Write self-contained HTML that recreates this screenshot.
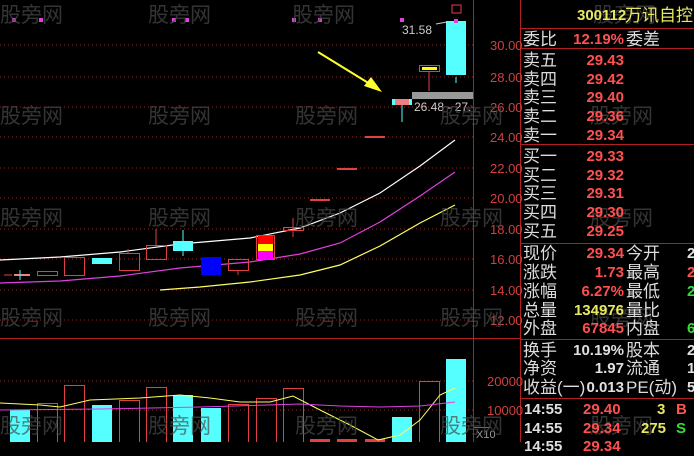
<!DOCTYPE html>
<html><head><meta charset="utf-8"><style>
*{margin:0;padding:0}
body{width:694px;height:442px;background:#000;overflow:hidden;position:relative;font-family:"Liberation Sans","Noto Sans CJK SC",sans-serif}
svg{position:absolute;left:0;top:0}
.r{position:absolute;left:521px;width:173px;height:19px;font-size:17px;line-height:19px;color:#ddd;white-space:nowrap;padding-left:2px}
.r span{position:absolute;font-weight:bold;font-size:15px}
.l{left:3px}
.v{right:72px;text-align:right}
.m{left:105px}
.e{left:166px}
.red{color:#ff5050}.yel{color:#e8e860}.grn{color:#30e030}.wh{color:#e0e0e0}
.m.lb{font-weight:normal!important;font-size:17px!important;color:#ddd}
</style></head><body>
<svg width="694" height="442" font-family="Liberation Sans,Noto Sans CJK SC,sans-serif">
<g stroke="#a02020" stroke-dasharray="1,3" stroke-width="1">
<line x1="0" y1="45" x2="473" y2="45"/><line x1="0" y1="77" x2="473" y2="77"/><line x1="0" y1="107" x2="473" y2="107"/><line x1="0" y1="137" x2="473" y2="137"/><line x1="0" y1="168" x2="473" y2="168"/><line x1="0" y1="198" x2="473" y2="198"/><line x1="0" y1="229" x2="473" y2="229"/><line x1="0" y1="259" x2="473" y2="259"/><line x1="0" y1="290" x2="473" y2="290"/><line x1="0" y1="320" x2="473" y2="320"/>
<line x1="0" y1="381" x2="473" y2="381"/><line x1="0" y1="410" x2="473" y2="410"/>
</g>
<line x1="473.5" y1="0" x2="473.5" y2="442" stroke="#b02020"/>
<line x1="0" y1="338.5" x2="521" y2="338.5" stroke="#b02020"/>
<line x1="520.5" y1="0" x2="520.5" y2="442" stroke="#b02020"/>
<g fill="#d04040" font-size="13">
<text x="490" y="50">30.00</text><text x="490" y="82">28.00</text><text x="490" y="112">26.00</text><text x="490" y="142">24.00</text><text x="490" y="173">22.00</text><text x="490" y="203">20.00</text><text x="490" y="234">18.00</text><text x="490" y="264">16.00</text><text x="490" y="295">14.00</text><text x="490" y="325">12.00</text>
<text x="487" y="386">20000</text><text x="487" y="415">10000</text>
</g>
<rect x="474" y="427" width="16" height="1" fill="#d04040"/>
<text x="476" y="438" fill="#999" font-size="11">X10</text>
<polyline fill="none" stroke="#fff" stroke-width="1.2" points="0,260 60,257 120,252 180,244 250,238 300,228 340,213 380,193 420,166 455,140"/>
<polyline fill="none" stroke="#e040e0" stroke-width="1.2" points="0,283 60,281 120,276 180,268 250,262 300,254 340,243 380,222 420,196 455,172"/>
<polyline fill="none" stroke="#ffff60" stroke-width="1.2" points="160,290 200,287 250,282 300,275 340,265 380,246 420,223 455,205"/>
<g stroke="#e04040" fill="none">
<line x1="4" y1="275" x2="12" y2="275"/>
<rect x="37.5" y="271.5" width="20" height="4"/>
<rect x="64.5" y="257.5" width="20" height="18"/>
<line x1="128" y1="249" x2="128" y2="253"/><rect x="119.5" y="253.5" width="20" height="17"/>
<line x1="156" y1="229" x2="156" y2="245"/><rect x="146.5" y="245.5" width="20" height="14"/>
<line x1="238" y1="271" x2="238" y2="275"/><rect x="228.5" y="259.5" width="20" height="11"/>
<rect x="256.5" y="235.5" width="18" height="24"/>
<line x1="293" y1="218" x2="293" y2="237"/><rect x="283.5" y="227.5" width="20" height="3"/>
</g>
<rect x="14" y="274" width="16" height="2" fill="#f08080"/><line x1="20" y1="270" x2="20" y2="280" stroke="#40ffff"/>
<rect x="92" y="258" width="20" height="6" fill="#5ff"/>
<line x1="183" y1="230" x2="183" y2="256" stroke="#5ff"/><rect x="173" y="241" width="20" height="10" fill="#5ff"/>
<rect x="201" y="257" width="20" height="18" fill="#00f"/>
<rect x="258" y="236" width="15" height="8" fill="#f00"/><rect x="258" y="244" width="15" height="7" fill="#ff0"/><rect x="258" y="251" width="15" height="8" fill="#f0f"/>
<rect x="310" y="199" width="20" height="2" fill="#e04040"/><rect x="337" y="168" width="20" height="2" fill="#e04040"/><rect x="365" y="136" width="20" height="2" fill="#e04040"/>
<line x1="402" y1="105" x2="402" y2="122" stroke="#5ff"/><rect x="392" y="99" width="20" height="6" fill="#5ff"/><rect x="395" y="99" width="14" height="6" fill="#f08080"/>
<rect x="412" y="92" width="61" height="7" fill="#999"/>
<line x1="429" y1="71" x2="429" y2="91" stroke="#e04040"/><rect x="419.5" y="65.5" width="20" height="6" fill="none" stroke="#e04040"/><rect x="422" y="67" width="15" height="3" fill="#ff0"/>
<line x1="456" y1="77" x2="456" y2="83" stroke="#5ff"/><rect x="446" y="21" width="20" height="54" fill="#5ff"/>
<rect x="452" y="5" width="9" height="8" fill="none" stroke="#e04040"/>
<text x="402" y="34" fill="#ccc" font-size="12">31.58</text><line x1="436" y1="24" x2="447" y2="22" stroke="#ccc"/>
<text x="414" y="111" fill="#ccc" font-size="12">26.48 - 27.</text>
<line x1="318" y1="52" x2="370" y2="84" stroke="#ffff30" stroke-width="2"/>
<polygon points="382,92 364,86 371,77" fill="#ffff30"/>
<g fill="#e040e0"><rect x="12" y="18" width="4" height="4"/><rect x="39" y="18" width="4" height="4"/><rect x="172" y="18" width="4" height="4"/><rect x="185" y="18" width="4" height="4"/><rect x="292" y="18" width="4" height="4"/><rect x="318" y="18" width="4" height="4"/><rect x="400" y="18" width="4" height="4"/><rect x="454" y="19" width="4" height="4"/></g>
<g fill="#5ff"><rect x="10" y="410" width="20" height="32"/><rect x="92" y="405" width="20" height="37"/><rect x="173" y="395" width="20" height="47"/><rect x="201" y="408" width="20" height="34"/><rect x="392" y="417" width="20" height="25"/><rect x="446" y="359" width="20" height="83"/></g>
<g fill="none" stroke="#e04040"><rect x="37.5" y="403.5" width="20" height="40"/><rect x="64.5" y="385.5" width="20" height="58"/><rect x="119.5" y="400.5" width="20" height="43"/><rect x="146.5" y="387.5" width="20" height="56"/><rect x="228.5" y="404.5" width="20" height="39"/><rect x="256.5" y="398.5" width="20" height="45"/><rect x="283.5" y="388.5" width="20" height="55"/><rect x="419.5" y="381.5" width="20" height="62"/></g>
<g fill="#e04040"><rect x="310" y="439" width="20" height="3"/><rect x="337" y="439" width="20" height="3"/><rect x="365" y="439" width="20" height="3"/></g>
<polyline fill="none" stroke="#ffff60" points="0,403 40,405 60,407 90,400 140,398 180,395 210,398 240,402 270,402 293,396 320,410 350,425 378,440 400,435 420,420 440,395 455,388"/>
<polyline fill="none" stroke="#e040e0" points="0,410 100,409 200,407 300,404 340,406 380,407 420,406 455,402"/>
<g stroke="#b02020"><line x1="521" y1="28.5" x2="694" y2="28.5"/><line x1="521" y1="48.5" x2="694" y2="48.5"/><line x1="521" y1="144.5" x2="694" y2="144.5"/><line x1="521" y1="243.5" x2="694" y2="243.5"/><line x1="521" y1="339.5" x2="694" y2="339.5"/><line x1="521" y1="398.5" x2="694" y2="398.5"/></g>
<g fill="#4a4a4a" fill-opacity="0.7" font-size="21">
<text x="0" y="22">股旁网</text><text x="148" y="22">股旁网</text><text x="292" y="22">股旁网</text><text x="593" y="22">股旁网</text>
<text x="0" y="123">股旁网</text><text x="148" y="123">股旁网</text><text x="295" y="123">股旁网</text><text x="440" y="123">股旁网</text><text x="590" y="123">股旁网</text>
<text x="0" y="225">股旁网</text><text x="148" y="225">股旁网</text><text x="295" y="225">股旁网</text><text x="440" y="225">股旁网</text><text x="590" y="225">股旁网</text>
<text x="0" y="325">股旁网</text><text x="148" y="325">股旁网</text><text x="295" y="325">股旁网</text><text x="440" y="325">股旁网</text><text x="590" y="325">股旁网</text>
<text x="0" y="433">股旁网</text><text x="148" y="433">股旁网</text><text x="295" y="433">股旁网</text><text x="440" y="433">股旁网</text><text x="590" y="433">股旁网</text>
</g>
</svg>
<div class="r" style="top:6px"><span style="left:56px" class="yel">300112</span><span style="left:104px;font-weight:normal;font-size:17px" class="yel">万讯自控</span></div>
<div class="r" style="top:30px">委比<span class="v red">12.19%</span><span class="m lb">委差</span></div>
<div class="r" style="top:51px">卖五<span class="v red">29.43</span></div>
<div class="r" style="top:70px">卖四<span class="v red">29.42</span></div>
<div class="r" style="top:88px">卖三<span class="v red">29.40</span></div>
<div class="r" style="top:107px">卖二<span class="v red">29.36</span></div>
<div class="r" style="top:126px">卖一<span class="v red">29.34</span></div>
<div class="r" style="top:147px">买一<span class="v red">29.33</span></div>
<div class="r" style="top:166px">买二<span class="v red">29.32</span></div>
<div class="r" style="top:184px">买三<span class="v red">29.31</span></div>
<div class="r" style="top:203px">买四<span class="v red">29.30</span></div>
<div class="r" style="top:222px">买五<span class="v red">29.25</span></div>
<div class="r" style="top:244px">现价<span class="v red">29.34</span><span class="m lb">今开</span><span class="e wh">2</span></div>
<div class="r" style="top:263px">涨跌<span class="v red">1.73</span><span class="m lb">最高</span><span class="e red">2</span></div>
<div class="r" style="top:282px">涨幅<span class="v red">6.27%</span><span class="m lb">最低</span><span class="e grn">2</span></div>
<div class="r" style="top:301px">总量<span class="v yel">134976</span><span class="m lb">量比</span></div>
<div class="r" style="top:319px">外盘<span class="v red">67845</span><span class="m lb">内盘</span><span class="e grn">67</span></div>
<div class="r" style="top:341px">换手<span class="v wh">10.19%</span><span class="m lb">股本</span><span class="e wh">2.4</span></div>
<div class="r" style="top:359px">净资<span class="v wh">1.97</span><span class="m lb">流通</span><span class="e wh">1.3</span></div>
<div class="r" style="top:378px">收益(一)<span class="v wh">0.013</span><span class="m lb">PE(动)</span><span class="e wh">5</span></div>
<div class="r" style="top:400px"><span class="l wh">14:55</span><span class="red" style="left:62px">29.40</span><span class="yel" style="left:136px">3</span><span class="red" style="left:155px">B</span></div>
<div class="r" style="top:419px"><span class="l wh">14:55</span><span class="red" style="left:62px">29.34</span><span class="yel" style="left:120px">275</span><span class="grn" style="left:155px">S</span></div>
<div class="r" style="top:437px"><span class="l wh">14:55</span><span class="red" style="left:62px">29.34</span></div>
</body></html>
